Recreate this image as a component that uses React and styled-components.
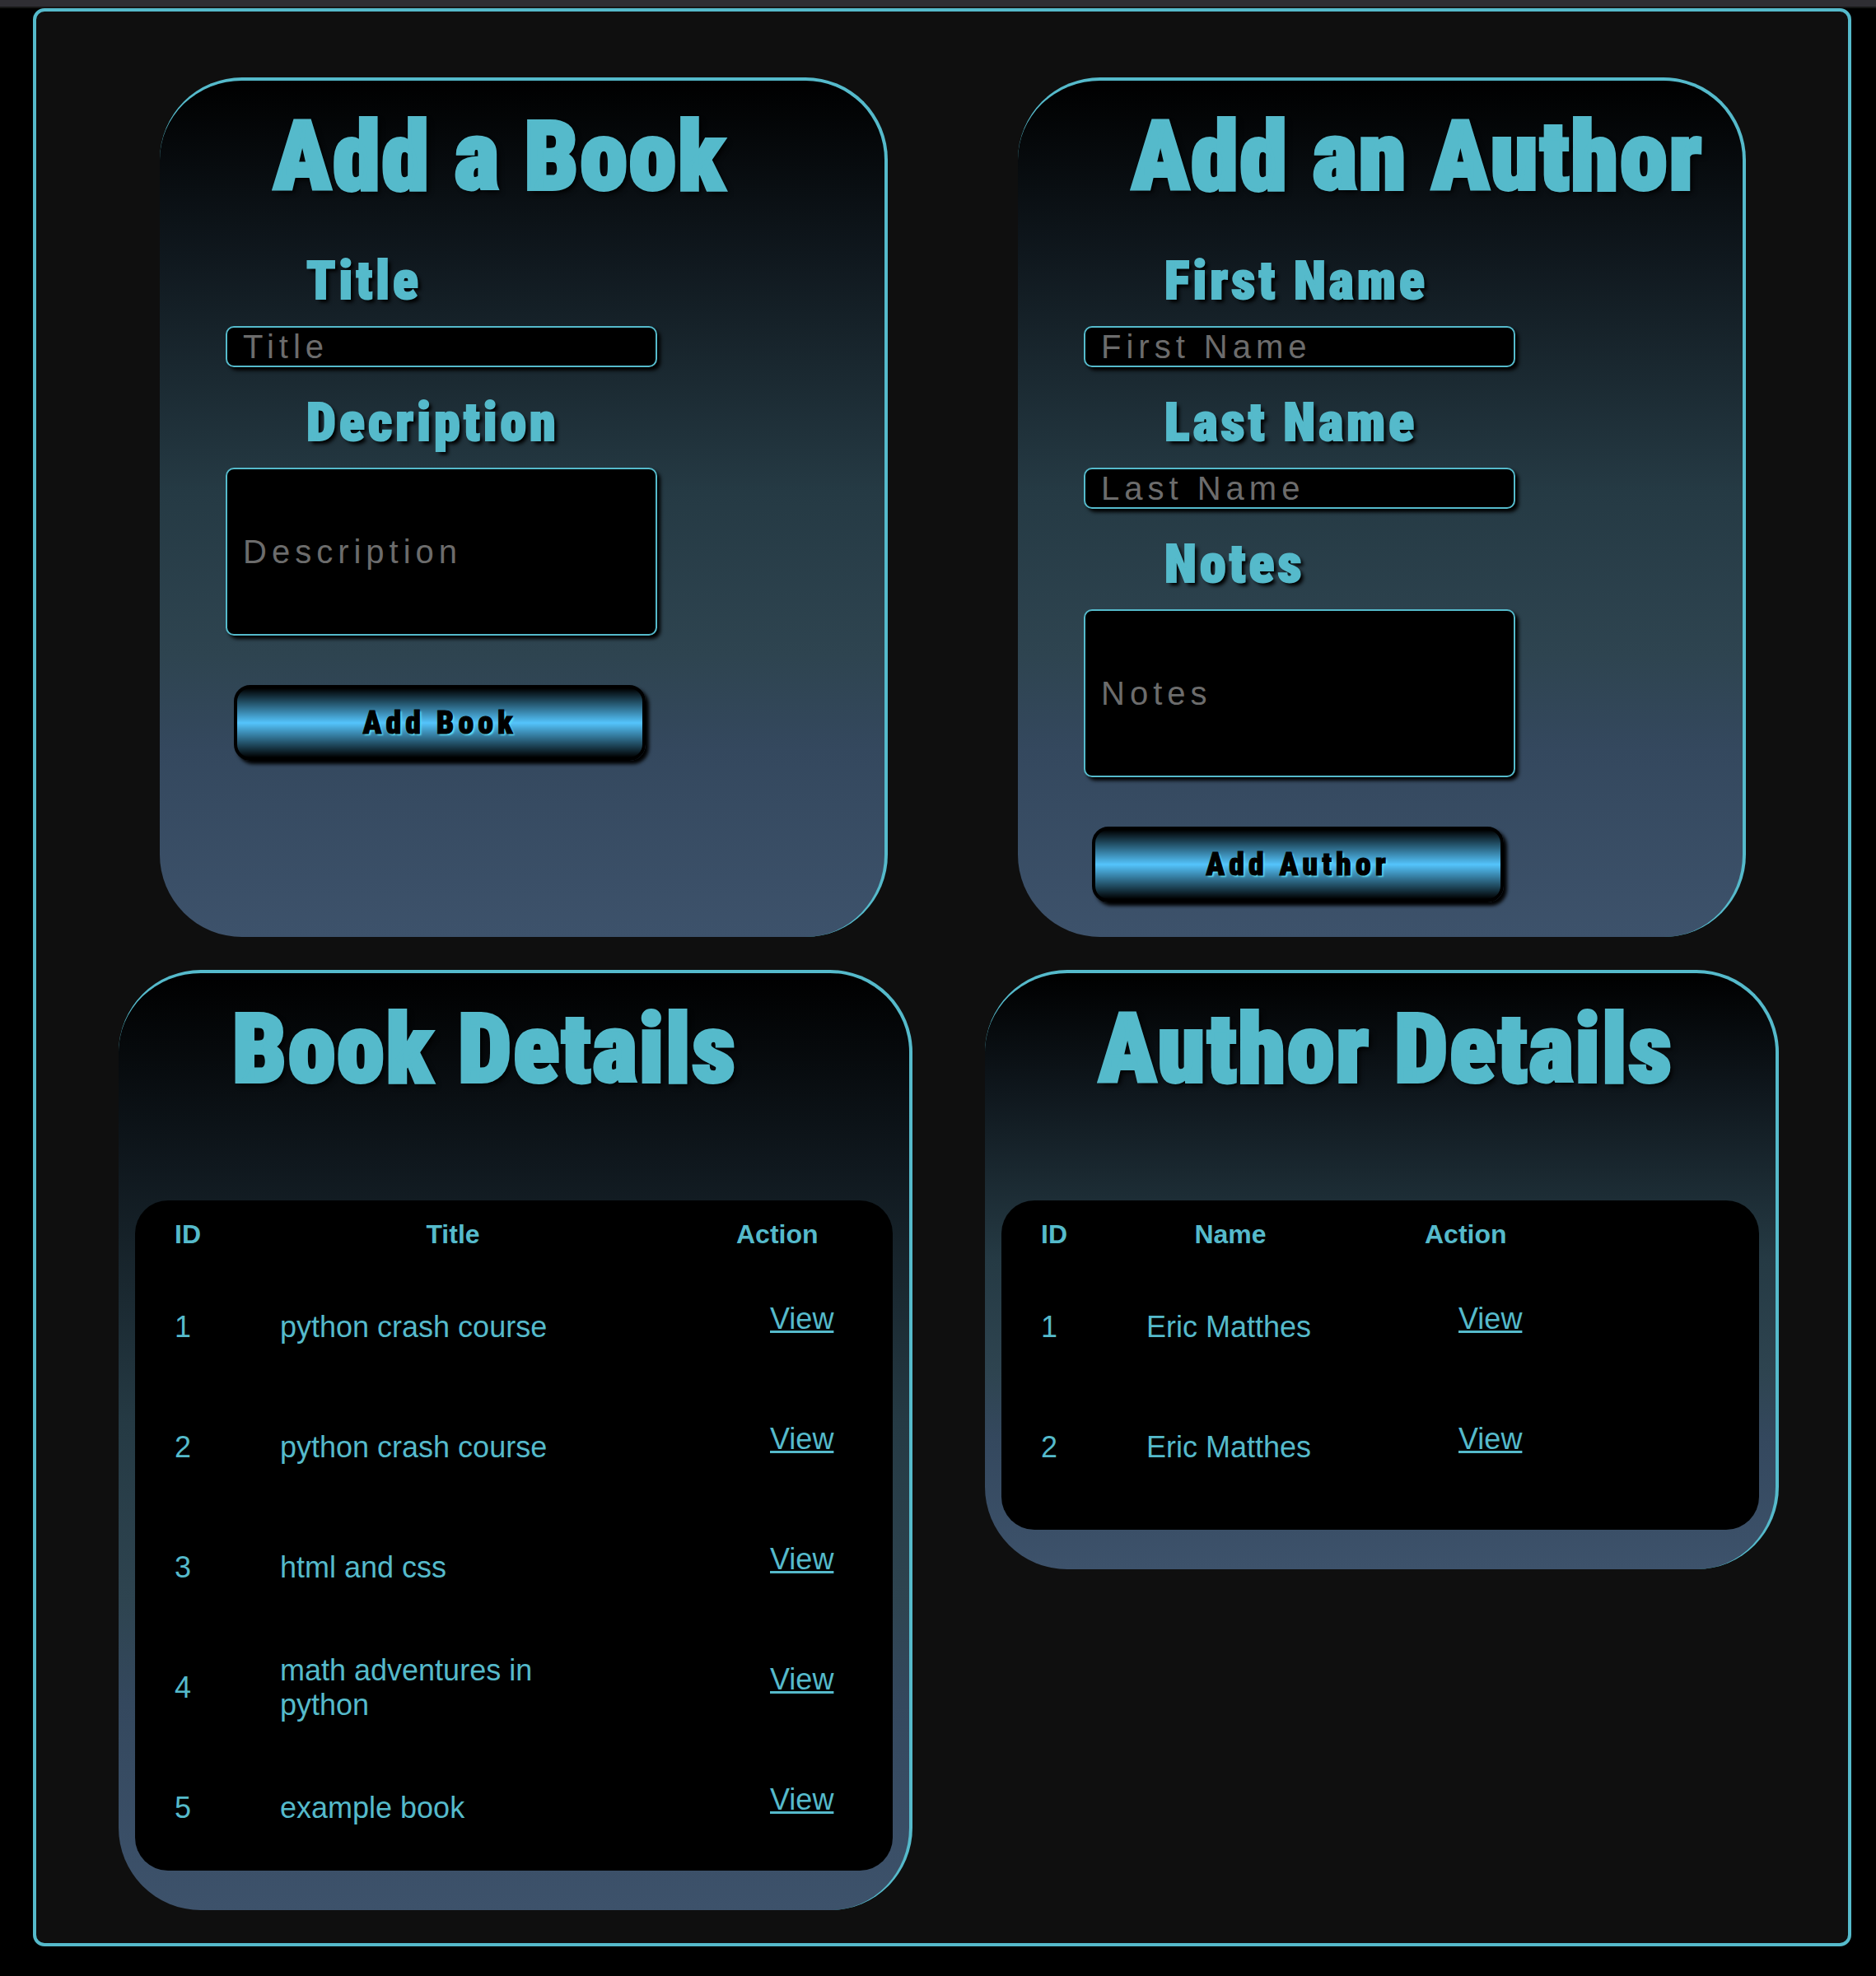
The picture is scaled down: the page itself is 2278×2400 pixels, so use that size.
import React, { useId } from "react";
import styled, { createGlobalStyle } from "styled-components";

const ACCENT = "#55bacb";
const DISPLAY = `Impact, "Roboto Condensed", Roboto, sans-serif`;
const BODY = `"Liberation Sans", Arial, sans-serif`;

const GlobalStyle = createGlobalStyle`
  *, *::before, *::after { box-sizing: border-box; }
  html { background: #000; }
  body {
    margin: 0;
    color: ${ACCENT};
    font-family: ${BODY};
  }
`;

const TopBar = styled.div`
  height: 10px;
  background: #2f2e33;
  border-bottom: 2px solid #161616;
`;

const Frame = styled.main`
  margin: 0 30px 36px 40px;
  padding: 80px 0 40px;
  background: #0f0f0f;
  border: 4px solid ${ACCENT};
  border-radius: 14px;
`;

const FormRow = styled.div`
  display: grid;
  grid-template-columns: repeat(2, minmax(0, 1fr));
  gap: 158px;
  padding: 0 124px 0 150px;
`;

const DetailRow = styled.div`
  display: grid;
  grid-template-columns: repeat(2, minmax(0, 1fr));
  align-items: start;
  gap: 88px;
  padding: 0 84px 0 100px;
  margin-top: 40px;
`;

const Card = styled.section`
  border-top: 4px solid ${ACCENT};
  border-right: 4px solid ${ACCENT};
  border-radius: 100px;
  background: linear-gradient(#000, #0f171d 20%, #253a44 48%, #2e4450 67%, #34485e 78%, #3d526b);
`;

const CardTitle = styled.h1`
  margin: 0;
  padding: 26px 0 18px 138px;
  font: 900 116px/132px ${DISPLAY};
  letter-spacing: 2px;
  white-space: nowrap;
  -webkit-text-stroke: 4px ${ACCENT};
  text-shadow: 4px 4px 6px #000;
`;

const Form = styled.form`
  display: flex;
  flex-direction: column;
  align-items: flex-start;
  padding: 0 80px 42px;
`;

const Label = styled.label`
  padding: 31px 0 17px 98px;
  font: 900 64px/74px ${DISPLAY};
  letter-spacing: 4px;
  -webkit-text-stroke: 2px ${ACCENT};
  text-shadow: 4px 4px 4px #000;
`;

const TextBox = styled.input`
  width: 524px;
  max-width: 100%;
  height: ${(p) => (p.$tall ? 204 : 50)}px;
  padding: 0 19px;
  color: ${ACCENT};
  background: #000;
  border: 2px solid ${ACCENT};
  border-radius: 10px;
  box-shadow: 4px 4px 4px #000;
  font: 40px ${BODY};
  letter-spacing: 6px;
  outline: none;
  &::placeholder { color: #6c6c6c; opacity: 1; }
`;

const Submit = styled.button`
  width: 500px;
  max-width: 100%;
  height: 92px;
  margin: 60px 0 0 10px;
  padding: 0;
  color: #000;
  background: linear-gradient(#000, #54c4fc, #000);
  border: 4px solid #000;
  border-radius: 20px;
  box-shadow: 4px 4px 4px #000;
  font: 900 38px ${DISPLAY};
  letter-spacing: 5px;
  -webkit-text-stroke: 1px #000;
  text-shadow: 2px 2px 2px #5fe0f6;
  cursor: pointer;
`;

const Panel = styled.div`
  min-height: 400px;
  margin: 100px 20px 48px;
  padding-bottom: 3px;
  background: #000;
  border-radius: 40px;
`;

const Table = styled.table`
  width: 100%;
  table-layout: fixed;
  border-collapse: collapse;
`;

const HeadCell = styled.th`
  width: ${(p) => (p.$width ? `${p.$width}px` : "auto")};
  height: 81px;
  padding: 0 48px;
  font-size: 32px;
  line-height: 36px;
  text-align: center;
`;

const ActionHead = styled(HeadCell)`
  padding: 0 0 0 86px;
  text-align: left;
`;

const Cell = styled.td`
  height: 146px;
  padding: 0 48px;
  font-size: 36px;
  line-height: 42px;
`;

const ActionCell = styled(Cell)`
  padding: 0 0 20px 127px;
`;

const ViewLink = styled.a`
  color: inherit;
  text-decoration: underline;
`;

const books = [
  "python crash course",
  "python crash course",
  "html and css",
  "math adventures in python",
  "example book",
];
const authors = ["Eric Matthes", "Eric Matthes"];

function Field({ label, placeholder = label, tall }) {
  const id = useId();
  return (
    <>
      <Label htmlFor={id}>{label}</Label>
      <TextBox id={id} type="text" placeholder={placeholder} $tall={tall} />
    </>
  );
}

function FormCard({ title, action, children }) {
  return (
    <Card>
      <CardTitle>{title}</CardTitle>
      <Form onSubmit={(e) => e.preventDefault()}>
        {children}
        <Submit type="submit">{action}</Submit>
      </Form>
    </Card>
  );
}

function DetailCard({ title, column, columnWidth, items }) {
  return (
    <Card>
      <CardTitle>{title}</CardTitle>
      <Panel>
        <Table>
          <thead>
            <tr>
              <HeadCell $width={128}>ID</HeadCell>
              <HeadCell $width={columnWidth}>{column}</HeadCell>
              <ActionHead>Action</ActionHead>
            </tr>
          </thead>
          <tbody>
            {items.map((item, i) => (
              <tr key={i}>
                <Cell>{i + 1}</Cell>
                <Cell>{item}</Cell>
                <ActionCell>
                  <ViewLink href={`#${column.toLowerCase()}-${i + 1}`}>View</ViewLink>
                </ActionCell>
              </tr>
            ))}
          </tbody>
        </Table>
      </Panel>
    </Card>
  );
}

export default function App() {
  return (
    <>
      <GlobalStyle />
      <TopBar />
      <Frame>
        <FormRow>
          <FormCard title="Add a Book" action="Add Book">
            <Field label="Title" />
            <Field label="Decription" placeholder="Description" tall />
          </FormCard>
          <FormCard title="Add an Author" action="Add Author">
            <Field label="First Name" />
            <Field label="Last Name" />
            <Field label="Notes" tall />
          </FormCard>
        </FormRow>
        <DetailRow>
          <DetailCard title="Book Details" column="Title" columnWidth={516} items={books} />
          <DetailCard title="Author Details" column="Name" columnWidth={300} items={authors} />
        </DetailRow>
      </Frame>
    </>
  );
}
